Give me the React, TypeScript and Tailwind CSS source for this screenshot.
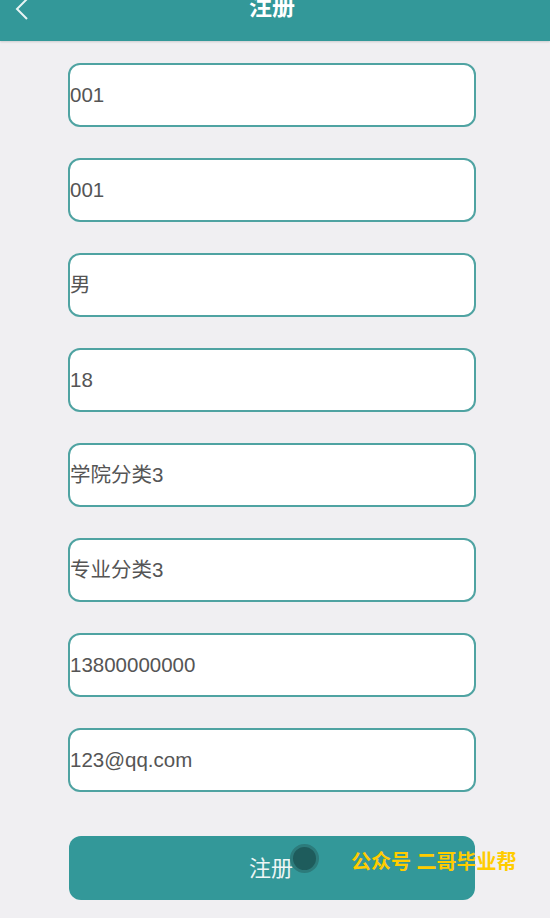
import React from 'react';

const fields = ['001', '001', '男', '18', '学院分类3', '专业分类3', '13800000000', '123@qq.com'];

const font = { fontFamily: '"Liberation Sans", "Noto Sans CJK SC", sans-serif' };

export default function App() {
  return (
    <div className="w-[550px] h-[918px] bg-[#f0eff2] overflow-hidden" style={font}>
      {/* Header */}
      <div className="relative h-[41px] bg-[#339899] shadow-[0_1px_2px_rgba(0,0,0,0.15)] flex justify-center">
        <svg className="absolute left-[12px] top-[-2px]" width="20" height="22" viewBox="0 0 20 22">
          <path d="M15 1 L5 11 L15 21" fill="none" stroke="#e8f4f4" strokeWidth="2" />
        </svg>
        <span className="mt-[-5px] ml-[-6px] text-[23px] font-bold text-white leading-[24px]">注册</span>
      </div>

      {/* Form */}
      <div className="flex flex-col items-start pl-[68px] pt-[22px] gap-[31px]">
        {fields.map((v, i) => (
          <div
            key={i}
            className="w-[408px] h-[64px] bg-white border-2 border-[#4fa3a2] rounded-[12px] flex items-center text-[20.5px] text-[#555555]"
          >
            {v}
          </div>
        ))}
        <div className="relative ml-[1px] w-[406px] h-[64px] mt-[13px] bg-[#339899] rounded-[12px] flex items-center justify-center text-[22px] text-[#eef6f6]">
          <span className="ml-[-2px]">注册</span>
          <span className="absolute left-[221px] top-[8px] w-[29px] h-[29px] rounded-full bg-[#1e5c5c] border-[3px] border-[#2c7b7b]" />
          <span className="absolute left-[282px] top-[11px] text-[20px] font-bold text-[#ffcc00] whitespace-nowrap">公众号 二哥毕业帮</span>
        </div>
      </div>
    </div>
  );
}
